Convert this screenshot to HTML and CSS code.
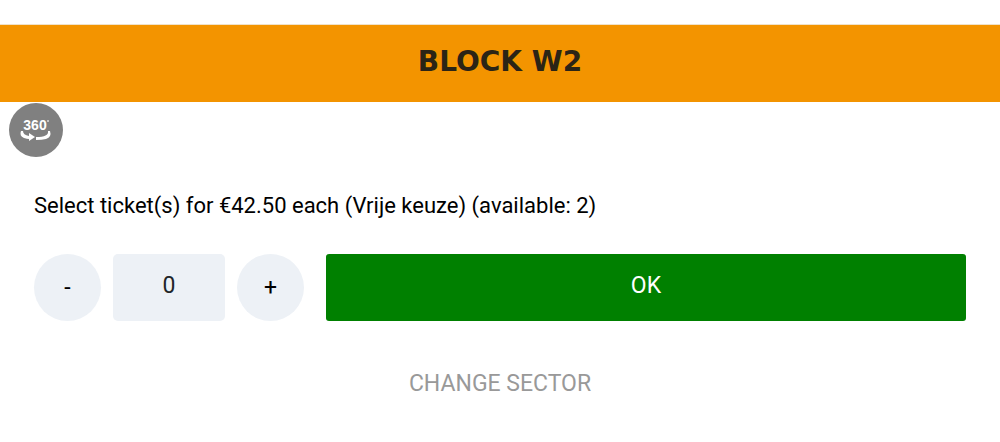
FILE: index.html
```html
<!DOCTYPE html>
<html lang="en">
<head>
	<meta charset="UTF-8">
	<meta name="viewport" content="width=device-width, initial-scale=1">
	<title>Block W2</title>
	<link rel="stylesheet" href="styles.css">
</head>
<body>
	<header class="block-header">
		<h1 class="block-title">BLOCK W2</h1>
	</header>

	<div class="view-bar">
		<button type="button" class="view-btn" aria-label="360 view">
			<svg viewBox="0 0 54 54" aria-hidden="true">
				<text x="26" y="27" text-anchor="middle" class="view-text">360</text>
				<circle cx="39" cy="18" r="1" fill="#ddd"/>
				<path d="M12 28 Q10 33 15 35 Q18 36 20 36 L20 38 L26 34 L20 30 L20 33 Q14 32 14 28 Z" fill="#fff"/>
				<path d="M39 28 L41 28 Q43 34 37 36 Q33 37 27 37 L27 34 Q40 34 39 28 Z" fill="#fff"/>
			</svg>
		</button>
	</div>

	<main class="tickets">
		<form class="ticket-form">
			<label class="ticket-label" for="amount">Select ticket(s) for €42.50 each (Vrije keuze) (available: 2)</label>
			<div class="ticket-row">
				<button type="button" class="step">-</button>
				<input type="text" class="amount" id="amount" value="0" inputmode="numeric">
				<button type="button" class="step">+</button>
				<button type="submit" class="ok">OK</button>
			</div>
		</form>
		<a href="#" class="change">CHANGE SECTOR</a>
	</main>
</body>
</html>
```
FILE: styles.css
```css
* {
	box-sizing: border-box;
}

body {
	margin: 0;
	padding-top: 24px;
	background-color: #fff;
	color: #000;
	font-family: Roboto, "Liberation Sans", sans-serif;
	font-size: 23px;
	line-height: 28px;
}

button, input {
	border: 0;
	padding: 0;
	font: inherit;
	cursor: pointer;
}

.block-header {
	padding: 19px 34px 22px;
	border-top: 1px solid #f0e2c8;
	background-color: #f39400;
	text-align: center;
}

.block-title {
	margin: 0;
	color: #2b2416;
	font-family: "DejaVu Sans", sans-serif;
	font-size: 28px;
	font-weight: 700;
	line-height: 36px;
}

.view-bar {
	display: flex;
	padding: 1px 9px 0;
}

.view-btn {
	width: 54px;
	height: 54px;
	border-radius: 50%;
	background-color: #808080;
}

.view-btn svg {
	display: block;
}

.view-text {
	fill: #fff;
	font-family: "Liberation Sans", sans-serif;
	font-size: 14px;
	font-weight: 700;
}

.tickets {
	padding: 35px 34px 40px;
	text-align: center;
}

.ticket-form {
	text-align: left;
}

.ticket-label {
	display: block;
	margin-bottom: 34px;
	font-size: 22px;
}

.ticket-row {
	display: flex;
	gap: 12px;
}

.step {
	width: 67px;
	height: 67px;
	border-radius: 50%;
	background-color: #edf1f6;
	color: #000;
}

.amount {
	width: 112px;
	height: 67px;
	padding-bottom: 4px;
	border-radius: 5px;
	background-color: #edf1f6;
	color: #212529;
	text-align: center;
}

.ok {
	flex: 1;
	height: 67px;
	margin-left: 10px;
	padding-bottom: 4px;
	border-radius: 3px;
	background-color: #008000;
	color: #fff;
}

.change {
	display: inline-block;
	margin-top: 49px;
	color: #999;
	text-decoration: none;
}
```
